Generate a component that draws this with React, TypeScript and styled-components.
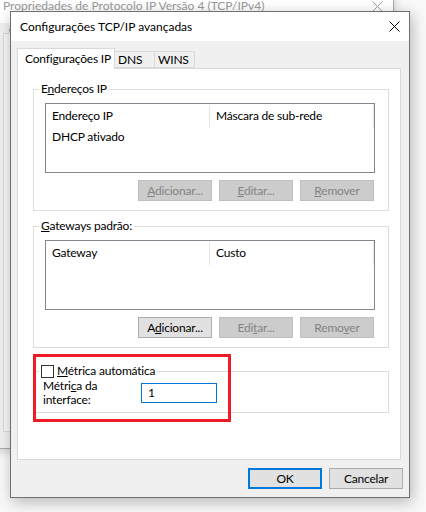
import React from "react";
import styled, { createGlobalStyle } from "styled-components";

const UI_FONT = `Lato, "Noto Sans", "Liberation Sans", sans-serif`;

const GlobalStyle = createGlobalStyle`
  html, body {
    margin: 0;
    padding: 0;
  }
  body {
    width: 426px;
    height: 512px;
    overflow: hidden;
    background: #f9f9f9;
    font-family: ${UI_FONT};
    font-size: 12px;
    line-height: 16px;
    letter-spacing: -0.2px;
    color: #000;
  }
  * {
    box-sizing: border-box;
  }
`;

const Desktop = styled.div`
  position: relative;
  width: 426px;
  height: 512px;
  overflow: hidden;
  background: #f9f9f9;
`;

/* inactive parent window behind the dialog */
const ParentWindow = styled.div`
  position: absolute;
  left: -6px;
  top: -12px;
  width: 400px;
  height: 461px;
  display: flex;
  flex-direction: column;
  background: #f0f0f0;
  border: 1px solid #aaaaaa;
  box-shadow: 0 2px 10px rgba(0, 0, 0, 0.18);
`;

const ParentTitleBar = styled.div`
  height: 34px;
  flex: none;
  display: flex;
  align-items: center;
  justify-content: space-between;
  padding: 0 10px 0 8px;
  background: #ffffff;
  color: #9a9a9a;
  font-size: 12px;
  letter-spacing: 0;
`;

const ParentBody = styled.div`
  flex: 1;
  display: flex;
  flex-direction: column;
  padding: 0 0 16px 8px;
`;

const ParentTab = styled.div`
  align-self: flex-start;
  height: 10px;
  padding: 0 6px;
  color: #1a1a6a;
  line-height: 14px;
  overflow: hidden;
`;

const ParentPanel = styled.div`
  flex: 1;
  background: #f7f7f7;
  border: 1px solid #d9d9d9;
`;

const Dialog = styled.div`
  position: absolute;
  left: 10px;
  top: 11px;
  width: 400px;
  height: 487px;
  display: flex;
  flex-direction: column;
  background: #f0f0f0;
  border: 1px solid #6f6f6f;
  box-shadow: 2px 4px 14px rgba(0, 0, 0, 0.28);
`;

const TitleBar = styled.div`
  height: 29px;
  flex: none;
  display: flex;
  align-items: center;
  justify-content: space-between;
  padding: 0 9px 0 9px;
  background: #ffffff;
  font-size: 12px;
  letter-spacing: 0;
`;

const CloseGlyph = ({ color = "#000" }: { color?: string }) => (
  <svg width="11" height="11" viewBox="0 0 11 11">
    <path d="M0.5 0.5 L10.5 10.5 M10.5 0.5 L0.5 10.5" stroke={color} strokeWidth="1" />
  </svg>
);

const Body = styled.div`
  flex: 1;
  display: flex;
  flex-direction: column;
  padding: 7px 8px 7px 6px;
`;

const TabStrip = styled.div`
  display: flex;
  align-items: flex-end;
  height: 20px;
  flex: none;
  position: relative;
  z-index: 1;
`;

const Tab = styled.div<{ $active?: boolean; $width: number }>`
  width: ${(p) => p.$width}px;
  height: ${(p) => (p.$active ? 21 : 17)}px;
  margin-bottom: ${(p) => (p.$active ? -1 : 0)}px;
  margin-left: ${(p) => (p.$active ? 0 : -1)}px;
  padding: 0 0 ${(p) => (p.$active ? 1 : 0)}px ${(p) => (p.$active ? 7 : 3)}px;
  display: flex;
  align-items: center;
  background: ${(p) => (p.$active ? "#ffffff" : "#f0f0f0")};
  border: 1px solid #d9d9d9;
  border-bottom: ${(p) => (p.$active ? "none" : "1px solid #d9d9d9")};
  white-space: nowrap;
  overflow: hidden;
`;

const Panel = styled.div`
  position: relative;
  height: 392px;
  flex: none;
  display: flex;
  flex-direction: column;
  gap: 7px;
  padding: 12px 11px 0 15px;
  background: #ffffff;
  border: 1px solid #d9d9d9;
`;

const Group = styled.fieldset`
  margin: 0;
  padding: 0;
  border: 1px solid #dcdcdc;
  min-width: 0;
`;

const Legend = styled.legend`
  margin-left: 5px;
  padding: 0 2px;
  line-height: 16px;
  display: flex;
  align-items: center;
  gap: 3px;
`;

const GroupContent = styled.div<{ $pad: string }>`
  padding: ${(p) => p.$pad};
`;

const ListBox = styled.div`
  height: 70px;
  border: 1px solid #828790;
  background: #ffffff;
  display: flex;
  flex-direction: column;
`;

const HeaderRow = styled.div`
  display: flex;
  height: 24px;
  padding-top: 1px;
`;

const HeaderCell = styled.div`
  width: 164px;
  height: 23px;
  padding: 0 0 1px 6px;
  display: flex;
  align-items: center;
  border-right: 1px solid #e5e5e5;
  white-space: nowrap;
`;

const DataRow = styled.div`
  height: 18px;
  padding: 0 0 0 6px;
  display: flex;
  align-items: center;
`;

const ButtonRow = styled.div`
  display: flex;
  justify-content: flex-end;
  gap: 7px;
  margin-top: 7px;
  margin-right: 1px;
`;

const Button = styled.button<{ $primary?: boolean }>`
  width: 74px;
  height: 21px;
  padding: 0;
  margin: 0;
  font-family: ${UI_FONT};
  font-size: 12px;
  letter-spacing: -0.2px;
  color: #000;
  background: #e1e1e1;
  border: ${(p) => (p.$primary ? "2px solid #0078d7" : "1px solid #adadad")};
  display: flex;
  align-items: center;
  justify-content: center;

  &:disabled {
    color: #838383;
    background: #cccccc;
    border-color: #bfbfbf;
  }
`;

const CheckBox = styled.span`
  width: 13px;
  height: 13px;
  border: 1px solid #333333;
  background: #ffffff;
  display: inline-block;
`;

const MetricRow = styled.div`
  display: flex;
  align-items: center;
`;

const MetricLabel = styled.div`
  width: 98px;
  line-height: 14px;
`;

const TextInput = styled.div`
  width: 76px;
  height: 20px;
  border: 1px solid #0078d7;
  background: #ffffff;
  padding-left: 6px;
  display: flex;
  align-items: center;
`;

/* red outline drawn over the metric box */
const Highlight = styled.div`
  position: absolute;
  left: 15px;
  top: 285px;
  width: 198px;
  height: 68px;
  border: 3px solid #ed1c24;
  pointer-events: none;
`;

const Footer = styled.div`
  display: flex;
  justify-content: flex-end;
  gap: 7px;
  margin-top: 8px;
  margin-right: -2px;
`;

const ListColumns: React.FC<{ first: string; second: string; rows?: string[] }> = ({
  first,
  second,
  rows = [],
}) => (
  <ListBox>
    <HeaderRow>
      <HeaderCell>{first}</HeaderCell>
      <HeaderCell>{second}</HeaderCell>
    </HeaderRow>
    {rows.map((r) => (
      <DataRow key={r}>{r}</DataRow>
    ))}
  </ListBox>
);

const App: React.FC = () => {
  return (
    <>
      <GlobalStyle />
      <Desktop>
        <ParentWindow>
          <ParentTitleBar>
            <span>Propriedades de Protocolo IP Versão 4 (TCP/IPv4)</span>
            <CloseGlyph color="#a0a0a0" />
          </ParentTitleBar>
          <ParentBody>
            <ParentTab>Geral</ParentTab>
            <ParentPanel />
          </ParentBody>
        </ParentWindow>

        <Dialog>
          <TitleBar>
            <span>Configurações TCP/IP avançadas</span>
            <CloseGlyph />
          </TitleBar>
          <Body>
            <TabStrip>
              <Tab $active $width={98}>
                Configurações IP
              </Tab>
              <Tab $width={41}>DNS</Tab>
              <Tab $width={41}>WINS</Tab>
            </TabStrip>

            <Panel>
              <Group>
                <Legend>
                  <span>
                    E<u>n</u>dereços IP
                  </span>
                </Legend>
                <GroupContent $pad="6px 13px 9px 11px">
                  <ListColumns
                    first="Endereço IP"
                    second="Máscara de sub-rede"
                    rows={["DHCP ativado"]}
                  />
                  <ButtonRow>
                    <Button disabled>
                      <span>
                        <u>A</u>dicionar...
                      </span>
                    </Button>
                    <Button disabled>
                      <span>
                        <u>E</u>ditar...
                      </span>
                    </Button>
                    <Button disabled>
                      <span>
                        <u>R</u>emover
                      </span>
                    </Button>
                  </ButtonRow>
                </GroupContent>
              </Group>

              <Group>
                <Legend>
                  <span>
                    <u>G</u>ateways padrão:
                  </span>
                </Legend>
                <GroupContent $pad="6px 13px 9px 11px">
                  <ListColumns first="Gateway" second="Custo" />
                  <ButtonRow>
                    <Button>
                      <span>
                        A<u>d</u>icionar...
                      </span>
                    </Button>
                    <Button disabled>
                      <span>
                        Edi<u>t</u>ar...
                      </span>
                    </Button>
                    <Button disabled>
                      <span>
                        Remo<u>v</u>er
                      </span>
                    </Button>
                  </ButtonRow>
                </GroupContent>
              </Group>

              <Group style={{ marginTop: 8 }}>
                <Legend>
                  <CheckBox />
                  <span>
                    <u>M</u>étrica automática
                  </span>
                </Legend>
                <GroupContent $pad="0 13px 5px 9px">
                  <MetricRow>
                    <MetricLabel>
                      Métri<u>c</u>a da interface:
                    </MetricLabel>
                    <TextInput>1</TextInput>
                  </MetricRow>
                </GroupContent>
              </Group>

              <Highlight />
            </Panel>

            <Footer>
              <Button $primary>OK</Button>
              <Button>Cancelar</Button>
            </Footer>
          </Body>
        </Dialog>
      </Desktop>
    </>
  );
};

export default App;
